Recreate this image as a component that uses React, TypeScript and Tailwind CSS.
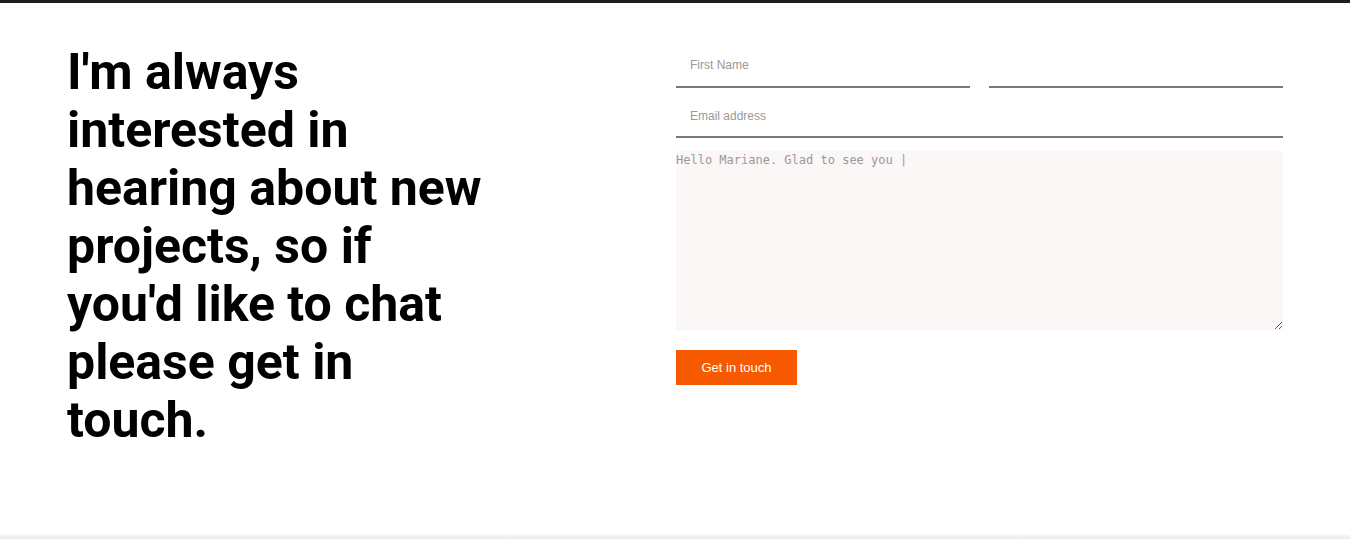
export default function App() {
  return (
    <div className="min-h-[539px] bg-white flex flex-col">
      <div className="h-[3px] bg-[#1c1c1c]" />
      <section className="flex-1 grid grid-cols-2 px-[67px] pt-[40px]">
        <h1
          className="max-w-[425px] text-[50px] leading-[58px] font-bold text-black"
          style={{ fontFamily: "Roboto, 'Liberation Sans', sans-serif" }}
        >
          I'm always interested in hearing about new projects, so if you'd like to chat please get in touch.
        </h1>
        <form className="flex flex-col pt-[5px] pl-[1px]" style={{ fontFamily: "'Liberation Sans', Arial, sans-serif" }}>
          <div className="grid grid-cols-2 gap-[19px]">
            <input
              type="text"
              placeholder="First Name"
              className="h-[40px] px-[14px] pb-[4px] text-[12px] border-b-2 border-[#777] outline-none placeholder:text-[#999]"
            />
            <input
              type="text"
              className="h-[40px] px-[14px] pb-[4px] text-[12px] border-b-2 border-[#777] outline-none placeholder:text-[#999]"
            />
          </div>
          <input
            type="email"
            placeholder="Email address"
            className="mt-[10px] h-[40px] px-[14px] pb-[2px] text-[12px] border-b-2 border-[#777] outline-none placeholder:text-[#999]"
          />
          <textarea
            placeholder="Hello Mariane. Glad to see you |"
            className="mt-[13px] h-[179px] bg-[#faf7f6] text-[12px] leading-[14px] pt-[2px] outline-none placeholder:text-[#999]"
            style={{ fontFamily: "'DejaVu Sans Mono', monospace" }}
          />
          <div className="mt-[20px]">
            <button
              type="button"
              className="h-[35px] w-[121px] bg-[#f75900] text-white text-[13px]"
            >
              Get in touch
            </button>
          </div>
        </form>
      </section>
      <div className="h-[5px] bg-gradient-to-b from-[#fbfbfb] to-[#e9e9e9]" />
    </div>
  )
}
